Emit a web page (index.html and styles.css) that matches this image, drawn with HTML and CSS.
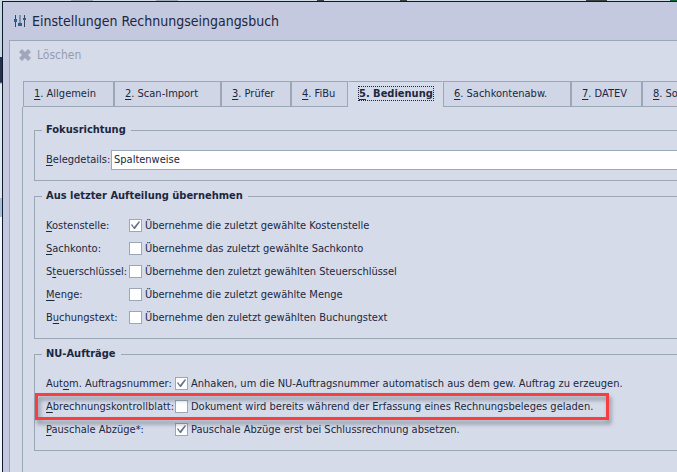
FILE: index.html
```html
<!DOCTYPE html>
<html lang="de">
<head>
    <meta charset="UTF-8">
    <meta name="viewport" content="width=device-width, initial-scale=1.0">
    <title>Einstellungen Rechnungseingangsbuch</title>
    <link rel="stylesheet" href="styles.css">
</head>
<body>
    <div class="window">
        <header class="titlebar">
            <svg class="title-icon" width="12" height="13" viewBox="0 0 12 13" aria-hidden="true">
                <path d="M1.5 0v12M10.5 0v12" stroke="#3a4558" stroke-width="1" fill="none"/>
                <path d="M6 0v9" stroke="#8590a4" stroke-width="2" fill="none"/>
                <path d="M0 4h3v3H0zM4 8h4v3H4zM9 3h3v2H9z" fill="#1d6596"/>
            </svg>
            <h1>Einstellungen Rechnungseingangsbuch</h1>
        </header>

        <main class="panel">
            <div class="toolbar">
                <button type="button" class="tool" disabled>
                    <svg width="12" height="12" viewBox="0 0 12 12" aria-hidden="true">
                        <path d="M3 0l3 3 3-3 3 3-3 3 3 3-3 3-3-3-3 3-3-3 3-3-3-3z" fill="#9ea8ba"/>
                    </svg>
                    <span>Löschen</span>
                </button>
            </div>

            <!-- Tabs -->
            <nav class="tabs">
                <button type="button" class="tab"><u>1</u>. Allgemein</button>
                <button type="button" class="tab"><u>2</u>. Scan-Import</button>
                <button type="button" class="tab"><u>3</u>. Prüfer</button>
                <button type="button" class="tab"><u>4</u>. FiBu</button>
                <button type="button" class="tab active"><span><u>5</u>. Bedienung</span></button>
                <button type="button" class="tab"><u>6</u>. Sachkontenabw.</button>
                <button type="button" class="tab"><u>7</u>. DATEV</button>
                <button type="button" class="tab"><u>8</u>. Sonstiges</button>
            </nav>

            <form class="page">
                <fieldset>
                    <legend>Fokusrichtung</legend>
                    <div class="row row-select">
                        <label for="belegdetails"><u>B</u>elegdetails:</label>
                        <select id="belegdetails">
                            <option>Spaltenweise</option>
                        </select>
                    </div>
                </fieldset>

                <fieldset>
                    <legend>Aus letzter Aufteilung übernehmen</legend>
                    <div class="row">
                        <label for="kostenstelle"><u>K</u>ostenstelle:</label>
                        <input type="checkbox" id="kostenstelle" checked>
                        <label for="kostenstelle">Übernehme die zuletzt gewählte Kostenstelle</label>
                    </div>
                    <div class="row">
                        <label for="sachkonto"><u>S</u>achkonto:</label>
                        <input type="checkbox" id="sachkonto">
                        <label for="sachkonto">Übernehme das zuletzt gewählte Sachkonto</label>
                    </div>
                    <div class="row">
                        <label for="steuerschluessel">S<u>t</u>euerschlüssel:</label>
                        <input type="checkbox" id="steuerschluessel">
                        <label for="steuerschluessel">Übernehme den zuletzt gewählten Steuerschlüssel</label>
                    </div>
                    <div class="row">
                        <label for="menge"><u>M</u>enge:</label>
                        <input type="checkbox" id="menge">
                        <label for="menge">Übernehme die zuletzt gewählte Menge</label>
                    </div>
                    <div class="row">
                        <label for="buchungstext">B<u>u</u>chungstext:</label>
                        <input type="checkbox" id="buchungstext">
                        <label for="buchungstext">Übernehme den zuletzt gewählten Buchungstext</label>
                    </div>
                </fieldset>

                <fieldset>
                    <legend>NU-Aufträge</legend>
                    <div class="row row-wide">
                        <label for="auftragsnummer">Aut<u>o</u>m. Auftragsnummer:</label>
                        <input type="checkbox" id="auftragsnummer" checked>
                        <label for="auftragsnummer">Anhaken, um die NU-Auftragsnummer automatisch aus dem gew. Auftrag zu erzeugen.</label>
                    </div>
                    <div class="row row-wide marked">
                        <label for="kontrollblatt"><u>A</u>brechnungskontrollblatt:</label>
                        <input type="checkbox" id="kontrollblatt">
                        <label for="kontrollblatt">Dokument wird bereits während der Erfassung eines Rechnungsbeleges geladen.</label>
                    </div>
                    <div class="row row-wide">
                        <label for="abzuege"><u>P</u>auschale Abzüge*:</label>
                        <input type="checkbox" id="abzuege" checked>
                        <label for="abzuege">Pauschale Abzüge erst bei Schlussrechnung absetzen.</label>
                    </div>
                </fieldset>
            </form>
        </main>
    </div>
</body>
</html>
```
FILE: styles.css
```css
*, ::before, ::after {
    box-sizing: border-box;
}
body {
    margin: 0;
    padding: 1px 0 0 2px;
    min-height: 100vh;
    display: flex;
    overflow: hidden;
    font-family: Tahoma, "DejaVu Sans Condensed", "Noto Sans", sans-serif;
    font-size: 11px;
    line-height: 14px;
    color: #1c2740;
    /* edge of the application behind the window */
    background:
        linear-gradient(90deg, #d0dde4 71px, #a3b0ba 71px, #a3b0ba 93px, #d0dde4 93px, #d0dde4 156px, #a3b0ba 156px, #a3b0ba 178px, #d0dde4 178px, #d0dde4 317px, #3c4440 317px, #3c4440 324px, #d0dde4 324px, #d0dde4 400px, #3c4440 400px, #3c4440 407px, #d0dde4 407px, #d0dde4 586px, #3c4440 586px, #3c4440 607px, #d0dde4 607px, #d0dde4 670px, #14663a 670px) top / 100% 1px no-repeat,
        linear-gradient(#c9d8e2 57px, #29304f 57px, #29304f 82px, #dfe6ee 84px, #dfe6ee 198px, #a9bfdc 198px, #a9bfdc 217px, #f4f6f9 217px);
}
button, select {
    font: inherit;
    color: inherit;
}
u {
    text-underline-offset: 2px;
}
.window {
    flex: 1;
    min-width: 0;
    display: flex;
    flex-direction: column;
    border: solid #0c1c2c;
    border-width: 1px 0 0 1px;
    background-color: #c5c9df;
}
.titlebar {
    display: flex;
    align-items: center;
    gap: 6px;
    height: 38px;
    padding-left: 11px;
}
.titlebar h1 {
    margin: 0;
    font-size: 14px;
    font-weight: normal;
    line-height: 20px;
    white-space: nowrap;
}
.panel {
    flex: 1;
    display: flex;
    flex-direction: column;
    margin-left: 6px;
    border: solid #9ba6b7;
    border-width: 1px 0 0 1px;
    background-color: #d6dbe9;
}
.toolbar {
    height: 40px;
    padding: 6px 0 0 9px;
}
.tool {
    display: flex;
    align-items: center;
    gap: 6px;
    padding: 0;
    border: none;
    background: none;
    font-size: 12px;
    line-height: 16px;
    color: #949db0;
}

/* Tabs */
.tabs {
    display: grid;
    grid-template-columns: 91px 107px 70px 57px 95px 128px 71px 91px;
    height: 26px;
    margin-left: 13px;
    overflow: hidden;
}
.tab {
    padding: 0 0 0 10px;
    border: 1px solid #9ba6b7;
    background-color: #d0d6e6;
    text-align: left;
    white-space: nowrap;
}
.tab.active {
    border-color: #9ba6b7 transparent transparent;
    background-color: #d6dbe9;
    font-weight: bold;
}
.tab.active span {
    outline: 1px dotted #1c2740;
}

/* Tab content */
.page {
    flex: 1;
    display: flex;
    flex-direction: column;
    gap: 8px;
    margin-left: 12px;
    padding: 16px 0 20px 11px;
    border-left: 1px solid #9ba6b7;
}
fieldset {
    min-width: 0;
    margin: 0;
    padding: 11px 0 9px 11px;
    border: 1px solid #9ba6b7;
    border-right: none;
}
legend {
    margin-left: -4px;
    padding: 0 5px 0 4px;
    font-weight: bold;
}
.row {
    display: grid;
    grid-template-columns: 83px 13px 1fr;
    align-items: center;
    height: 23px;
    white-space: nowrap;
}
.row-wide {
    grid-template-columns: 129px 13px 1fr;
}
.row-select {
    grid-template-columns: 65px 1fr;
}
.row input + label {
    padding-left: 3px;
}
select {
    appearance: none;
    height: 20px;
    padding: 0 2px;
    border: 1px solid #9ba6b7;
    border-right: none;
    border-radius: 0;
    background-color: #fff;
}
input[type="checkbox"] {
    appearance: none;
    width: 13px;
    height: 13px;
    margin: 0;
    border: 1px solid #9ba6b7;
    background-color: #fff;
}
input[type="checkbox"]:checked::before {
    content: "";
    display: block;
    height: 11px;
    background-color: #66748c;
    clip-path: polygon(1px 5px, 2px 4px, 4px 7px, 9px 1px, 10px 2px, 5px 9px, 4px 9px);
}

/* Highlighted row */
.marked {
    position: relative;
}
.marked::after {
    content: "";
    position: absolute;
    top: -2px;
    bottom: -2px;
    left: -11px;
    width: 574px;
    border: 3px solid #f93e40;
    filter: drop-shadow(2px 4px 2px rgba(50, 60, 75, 0.5));
    pointer-events: none;
}
```
